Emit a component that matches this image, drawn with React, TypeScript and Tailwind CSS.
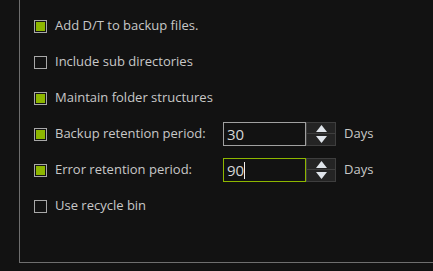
import { useState } from 'react'

function Check({ on }: { on: boolean }) {
  return (
    <span className="w-[13px] h-[13px] border border-[#a8a8a8] bg-[#121212] flex items-center justify-center shrink-0">
      {on && <span className="w-[9px] h-[9px] bg-[#8db600]" />}
    </span>
  )
}

function Spin({ value, focused }: { value: string; focused?: boolean }) {
  return (
    <div className="flex items-center">
      <div
        className={`w-[83px] h-[24px] border flex items-center pl-[3px] text-[15px] text-[#d6d6d6] ${
          focused ? 'border-[#8db600]' : 'border-[#a0a0a0]'
        }`}
      >
        {value}
        {focused && <span className="w-px h-[17px] bg-[#f0f0f0]" />}
      </div>
      <div className="w-[30px] h-[24px] flex flex-col">
        <div className="h-[12px] border border-[#3e3e3e] bg-[#242424] flex items-center justify-center">
          <svg width="11" height="7" viewBox="0 0 11 7"><path d="M5.5 0 L11 7 L0 7 Z" fill="#dfe4ea" /></svg>
        </div>
        <div className="h-[12px] border border-t-0 border-[#3e3e3e] bg-[#242424] flex items-center justify-center">
          <svg width="11" height="7" viewBox="0 0 11 7"><path d="M0 0 L11 0 L5.5 7 Z" fill="#dfe4ea" /></svg>
        </div>
      </div>
      <span className="ml-[8px]">Days</span>
    </div>
  )
}

export default function App() {
  const [rows] = useState([
    { label: 'Add D/T to backup files.', on: true },
    { label: 'Include sub directories', on: false },
    { label: 'Maintain folder structures', on: true },
    { label: 'Backup retention period:', on: true, spin: '30' },
    { label: 'Error retention period:', on: true, spin: '90', focused: true },
    { label: 'Use recycle bin', on: false },
  ])

  return (
    <div
      className="w-[433px] h-[271px] bg-[#121212] text-[#c8c8c8] text-[13px] overflow-hidden"
      style={{ fontFamily: '"Open Sans", "Noto Sans", sans-serif' }}
    >
      <div className="ml-[19px] h-[263px] border-l border-b border-[#6e6e6e] pl-[14px] pt-[8px] flex flex-col">
        {rows.map((r) => (
          <div key={r.label} className="h-[36px] flex items-center">
            <Check on={r.on} />
            <span className={`ml-[8px] ${r.spin ? 'w-[168px]' : ''}`}>{r.label}</span>
            {r.spin && <Spin value={r.spin} focused={r.focused} />}
          </div>
        ))}
      </div>
    </div>
  )
}
